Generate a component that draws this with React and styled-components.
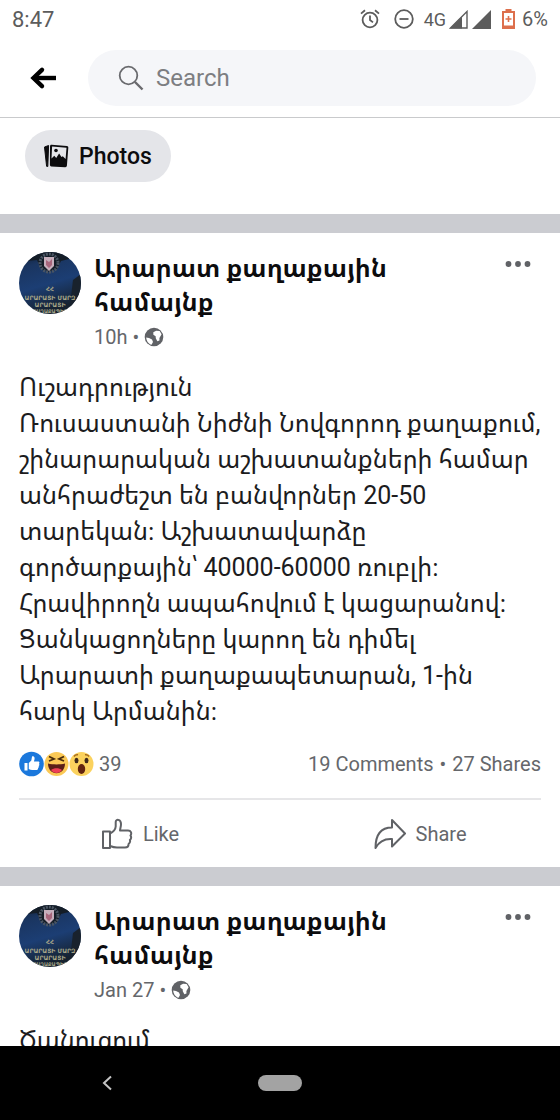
import React from 'react';
import styled, { createGlobalStyle } from 'styled-components';

const GlobalStyle = createGlobalStyle`
  * {
    box-sizing: border-box;
  }

  body {
    margin: 0;
    background: #fff;
    color: #0c0c0e;
    font-family: Roboto, 'Noto Sans Armenian', 'Noto Sans', 'DejaVu Sans', sans-serif;
  }

  button,
  input {
    font-family: inherit;
  }

  button {
    padding: 0;
    border: none;
    background: none;
    cursor: pointer;
  }

  svg {
    display: block;
    flex-shrink: 0;
  }
`;

const Screen = styled.div`
  display: flex;
  flex-direction: column;
  height: 100vh;
  overflow: hidden;
`;

const StatusBar = styled.div`
  display: flex;
  align-items: center;
  justify-content: space-between;
  height: 38px;
  padding: 0 12px;
  flex-shrink: 0;
  color: #5c5c5c;
  font-size: 20px;
`;

const Clock = styled.span`
  font-size: 22px;
`;

const StatusIcons = styled.div`
  display: flex;
  align-items: center;
`;

const StatusIcon = styled.svg`
  margin-right: ${({ $gap }) => $gap}px;
`;

const Network = styled.span`
  margin-right: 3px;
  font-size: 18px;
`;

const Header = styled.header`
  display: flex;
  align-items: center;
  height: 80px;
  padding: 0 24px 0 28px;
  flex-shrink: 0;
  border-bottom: 1px solid #c9cacc;
`;

const BackButton = styled.button`
  width: 60px;
`;

const SearchField = styled.label`
  display: flex;
  flex: 1;
  align-items: center;
  gap: 12px;
  height: 56px;
  padding: 0 30px;
  border-radius: 28px;
  background: #f5f6f9;
`;

const SearchInput = styled.input`
  flex: 1;
  min-width: 0;
  padding: 0;
  border: none;
  outline: none;
  background: transparent;
  color: #333;
  font-size: 24px;

  &::placeholder {
    color: #7d7e82;
    opacity: 1;
  }
`;

const Feed = styled.main`
  flex: 1;
  min-height: 0;
  overflow: hidden;
`;

const Chips = styled.div`
  padding: 12px 25px 32px;
`;

const Chip = styled.button`
  display: flex;
  align-items: center;
  gap: 10px;
  height: 52px;
  padding: 0 19px;
  border-radius: 26px;
  background: #e4e5e9;
  color: #0c0c0e;
  font-size: 23px;
  font-weight: 500;
`;

const Post = styled.article`
  padding: 0 19px;
  border-top: 19px solid #cbccd1;
`;

const PostHeader = styled.div`
  display: flex;
  align-items: flex-start;
  padding-top: 19px;
`;

const PostInfo = styled.div`
  flex: 1;
  min-width: 0;
  margin-left: 13px;
`;

const Author = styled.h2`
  max-width: 320px;
  margin: 0;
  font-size: 25px;
  font-weight: 700;
  line-height: 34px;
`;

const Meta = styled.div`
  display: flex;
  align-items: center;
  gap: 5px;
  height: 34px;
  color: #65676b;
  font-size: 20px;
`;

const MoreButton = styled.button`
  padding: 8px 10px;
`;

const Body = styled.p`
  margin: 16px 0 0;
  color: #1c1c1e;
  font-size: 25px;
  line-height: 36px;
  white-space: pre-line;
`;

const Stats = styled.div`
  display: flex;
  align-items: center;
  gap: 6px;
  height: 70px;
  border-bottom: 2px solid #e6e6e8;
  color: #65676b;
  font-size: 20px;
`;

const Reactions = styled.div`
  display: flex;
  flex: 1;
  align-items: center;
`;

const Count = styled.span`
  margin-left: 5px;
`;

const Actions = styled.div`
  display: grid;
  grid-template-columns: 1fr 1fr;
  height: 67px;
  margin: 0 -19px;
`;

const Action = styled.button`
  display: flex;
  align-items: center;
  justify-content: center;
  gap: 10px;
  color: #65676b;
  font-size: 20px;
`;

const NavBar = styled.nav`
  display: grid;
  grid-template-columns: 1fr auto 1fr;
  align-items: center;
  height: 74px;
  flex-shrink: 0;
  background: #000;
`;

const NavBack = styled.button`
  justify-self: end;
  margin-right: 145px;
`;

const HomePill = styled.button`
  width: 44px;
  height: 16px;
  border-radius: 8px;
  background: #a3a3a3;
`;

const posts = [
  {
    id: 1,
    author: 'Արարատ քաղաքային համայնք',
    time: '10h',
    text: `Ուշադրություն
Ռուսաստանի Նիժնի Նովգորոդ քաղաքում,
շինարարական աշխատանքների համար
անհրաժեշտ են բանվորներ 20-50
տարեկան։ Աշխատավարձը
գործարքային՝ 40000-60000 ռուբլի։
Հրավիրողն ապահովում է կացարանով։
Ցանկացողները կարող են դիմել
Արարատի քաղաքապետարան, 1-ին
հարկ Արմանին։`,
    reactions: 39,
    comments: 19,
    shares: 27,
  },
  {
    id: 2,
    author: 'Արարատ քաղաքային համայնք',
    time: 'Jan 27',
    text: 'Ծանուցում',
  },
];

const AlarmIcon = () => (
  <StatusIcon $gap={14} width="20" height="20" viewBox="0 0 20 20" fill="none" stroke="#5c5c5c" strokeWidth="1.8">
    <circle cx="10" cy="11" r="7.4" />
    <path d="M10 6.5V11l3 2.4M1 4.6l4-3.4M19 4.6l-4-3.4" />
  </StatusIcon>
);

const DndIcon = () => (
  <StatusIcon $gap={10} width="20" height="20" viewBox="0 0 20 20" fill="none" stroke="#5c5c5c" strokeWidth="1.8">
    <circle cx="10" cy="10" r="8.8" />
    <path d="M5.5 10h9" />
  </StatusIcon>
);

const SignalIcon = ({ partial }) => (
  <StatusIcon $gap={partial ? 4 : 11} width="19" height="19" viewBox="0 0 19 19" fill="#5c5c5c">
    {partial ? (
      <>
        <path d="M1.5 18 18 1.5V18z" fill="none" stroke="#5c5c5c" strokeWidth="1.4" />
        <path d="M1 18.5 13 6.5v12z" />
      </>
    ) : (
      <path d="M0 19 19 0v19z" />
    )}
  </StatusIcon>
);

const BatteryIcon = () => (
  <StatusIcon $gap={7} width="13" height="20" viewBox="0 0 13 20" fill="none" stroke="#dd6f4c" strokeWidth="2">
    <path d="M4.5 2V1h4v1" />
    <path d="M1 3h11v16H1z" />
    <path d="M3.5 10h6M6.5 7v6" strokeWidth="1.6" />
    <path d="M1 17.5h11" />
  </StatusIcon>
);

const BackArrow = () => (
  <svg width="30" height="24" viewBox="0 0 30 24" fill="none" stroke="#000" strokeWidth="4.4">
    <path d="M28 12H6" />
    <path d="M14 3.8 5.5 12l8.5 8.2" strokeLinecap="round" strokeLinejoin="miter" />
  </svg>
);

const SearchIcon = () => (
  <svg width="26" height="26" viewBox="0 0 26 26" fill="none" stroke="#696a6e" strokeWidth="1.8">
    <circle cx="10.5" cy="10.5" r="8.8" />
    <path d="m17 17 7.5 7.5" strokeWidth="2.4" />
  </svg>
);

const PhotosIcon = () => (
  <svg width="25" height="24" viewBox="0 0 25 24">
    <path d="M0.5 3 4.6 1.5 3.8 22.5 2.6 22.3z" fill="#0c0c0e" stroke="#0c0c0e" strokeLinejoin="round" />
    <path d="m7.5.8 15.4 1.2c1 .1 1.5.8 1.4 1.8l-1.4 18c-.1 1-.8 1.500-1.800 1.400L7.300 22.400c-1-.1-1.400-.7-1.400-1.600L6 2.400C6 1.400 6.600.7 7.500.8z" fill="#0c0c0e" />
    <path d="m8.1 2.600 14.400 1.200-.9 11.300-2.800-2.800-1.300.6-2.400-3.400-2.900 4.400-1.900-2.200-2.800 2.800z" fill="#e4e5e9" />
    <circle cx="12" cy="6.500" r="1.800" fill="#0c0c0e" />
  </svg>
);

const MoreIcon = () => (
  <svg width="26" height="8" viewBox="0 0 26 8" fill="#606266">
    <circle cx="3.5" cy="4" r="2.9" />
    <circle cx="13" cy="4" r="2.9" />
    <circle cx="22.5" cy="4" r="2.9" />
  </svg>
);

const GlobeIcon = () => (
  <svg width="20" height="20" viewBox="0 0 20 20">
    <circle cx="10" cy="10" r="9.3" fill="#606266" />
    <path d="M3 5.500 6 3l4 1.500 2.500-.5 1 2-2.500 2-2 .5L8 11l-2.500.5L3.500 9z" fill="#fff" transform="rotate(100 10 10)" />
    <path d="M2.200 10.500 5 11l3 1.500 1 2.500-1.500 2.800C4.500 17 2.500 14 2.200 10.500z" fill="#fff" />
  </svg>
);

const Avatar = ({ id }) => (
  <svg width="62" height="62" viewBox="0 0 62 62" role="img" aria-label="Avatar">
    <defs>
      <clipPath id={`avatar-clip-${id}`}>
        <circle cx="31" cy="31" r="31" />
      </clipPath>
      <linearGradient id={`avatar-sky-${id}`} x1="0" y1="0" x2="0.3" y2="1">
        <stop offset="0" stopColor="#101c2c" />
        <stop offset="0.25" stopColor="#1a3560" />
        <stop offset="0.6" stopColor="#1c3e74" />
        <stop offset="1" stopColor="#16222f" />
      </linearGradient>
    </defs>
    <g clipPath={`url(#avatar-clip-${id})`}>
      <path d="M0 0h62v62H0z" fill={`url(#avatar-sky-${id})`} />
      <path d="M8 0h46l-4 7-8 2-4 8-8 3-8-3-4-9-10 1z" fill="#141d27" />
      <path d="M54 28l8-6v40H50z" fill="#19222d" />
      <circle cx="30" cy="11" r="9" fill="none" stroke="#4a5563" strokeWidth="3" strokeDasharray="2 1" />
      <path d="M25 5h10v9l-5 5-5-5z" fill="#c6aebb" />
      <path d="m27 8 3 2 3-3v6l-3 3-3-3z" fill="#a8667c" />
      <g fill="#a5a488" fontFamily="DejaVu Sans, sans-serif" fontWeight="700" textAnchor="middle">
        <text x="31" y="39" fontSize="6">ՀՀ</text>
        <text x="31" y="48" fontSize="6">ԱՐԱՐԱՏԻ ՄԱՐԶ</text>
        <text x="31" y="55" fontSize="6">ԱՐԱՐԱՏԻ</text>
        <text x="31" y="61" fontSize="5">ՔԱՂԱՔԱՊԵՏ</text>
      </g>
    </g>
  </svg>
);

const LikeReaction = () => (
  <svg width="25" height="26" viewBox="0 0 25 26">
    <circle cx="12.500" cy="13" r="12.300" fill="#1b78dc" />
    <path d="M5.500 12h3v7.500h-3zM9.800 12l2.500-2.400.7-3.800c.2-.9 2.600-.5 2.600 1.500 0 1.500-.6 2.500-.6 3.200h4c1.600 0 1.800 1.500 1 2.300.6.8.4 1.700-.3 2.200.3.900 0 1.500-.6 2 .1 1.400-.6 2-1.700 2h-4.200c-1.200 0-2.300-.3-3.400-1z" fill="#fff" />
  </svg>
);

const HahaReaction = () => (
  <svg width="25" height="26" viewBox="0 0 25 26">
    <circle cx="12.500" cy="13" r="12" fill="#fbc956" />
    <path d="m5 5.500 5 2.500-5 2M20 5.500 15 8l5 2" fill="none" stroke="#4a2c0c" strokeWidth="1.800" />
    <path d="M4 12.500c5 1.200 12 1.200 17 0 0 6-4 9.800-8.500 9.800S4 18.500 4 12.500z" fill="#5a1f18" />
    <path d="M7 19c3-2.500 8-2.500 11 0-2.500 4-8.500 4-11 0z" fill="#ee3f55" />
  </svg>
);

const WowReaction = () => (
  <svg width="25" height="26" viewBox="0 0 25 26">
    <circle cx="12.500" cy="13" r="12" fill="#fbd25e" />
    <path d="M5 5.500c1-1.500 2.500-2 4-1.700M20 5.500c-1-1.500-2.500-2-4-1.700" fill="none" stroke="#a86c1e" strokeWidth="1.400" />
    <ellipse cx="7.500" cy="9.500" rx="2" ry="2.700" fill="#3f2a1c" />
    <ellipse cx="17.500" cy="9.500" rx="2" ry="2.700" fill="#3f2a1c" />
    <ellipse cx="12.500" cy="18" rx="3.700" ry="5" fill="#63240f" />
  </svg>
);

const LikeIcon = () => (
  <svg width="32" height="32" viewBox="0 0 32 32" fill="none" stroke="#606266" strokeWidth="2" strokeLinejoin="round">
    <path d="M2 13.500h7V30H2z" />
    <path d="M9 15.500c3-1.500 5.500-4 5.700-7V4c0-3.300 5.300-3 5.300 2 0 2.500-.8 4.500-1 6.500h8c3 0 4 2.700 2.500 5 1 1.700.8 3.300-.6 4.500.6 1.700 0 3-1.300 4 0 2.500-1.500 3.500-3.600 3.500H16c-2.500 0-4.500-.5-7-1.500" />
  </svg>
);

const ShareIcon = () => (
  <svg width="32" height="32" viewBox="0 0 32 32" fill="none" stroke="#606266" strokeWidth="2" strokeLinejoin="round">
    <path d="M18 2 31 15.500 18 28.500V21C10 20.500 5 23.500 1.500 30 1.500 17 7 9.500 18 9.500z" />
  </svg>
);

const FeedPost = ({ post }) => (
  <Post>
    <PostHeader>
      <Avatar id={post.id} />
      <PostInfo>
        <Author>{post.author}</Author>
        <Meta>
          <span>{post.time}</span>
          <span>•</span>
          <GlobeIcon />
        </Meta>
      </PostInfo>
      <MoreButton aria-label="More">
        <MoreIcon />
      </MoreButton>
    </PostHeader>
    <Body>{post.text}</Body>
    {post.reactions && (
      <>
        <Stats>
          <Reactions>
            <LikeReaction />
            <HahaReaction />
            <WowReaction />
            <Count>{post.reactions}</Count>
          </Reactions>
          <span>{post.comments} Comments</span>
          <span>•</span>
          <span>{post.shares} Shares</span>
        </Stats>
        <Actions>
          <Action>
            <LikeIcon />
            Like
          </Action>
          <Action>
            <ShareIcon />
            Share
          </Action>
        </Actions>
      </>
    )}
  </Post>
);

const App = () => (
  <>
    <GlobalStyle />
    <Screen>
      <StatusBar>
        <Clock>8:47</Clock>
        <StatusIcons>
          <AlarmIcon />
          <DndIcon />
          <Network>4G</Network>
          <SignalIcon partial />
          <SignalIcon />
          <BatteryIcon />
          <span>6%</span>
        </StatusIcons>
      </StatusBar>
      <Header>
        <BackButton aria-label="Back">
          <BackArrow />
        </BackButton>
        <SearchField>
          <SearchIcon />
          <SearchInput type="text" placeholder="Search" aria-label="Search" />
        </SearchField>
      </Header>
      <Feed>
        <Chips>
          <Chip>
            <PhotosIcon />
            Photos
          </Chip>
        </Chips>
        {posts.map((post) => (
          <FeedPost key={post.id} post={post} />
        ))}
      </Feed>
      <NavBar>
        <NavBack aria-label="Back">
          <svg width="12" height="16" viewBox="0 0 12 16" fill="none" stroke="#c4c4c4" strokeWidth="2">
            <path d="M10 1.500 3 8l7 6.500" />
          </svg>
        </NavBack>
        <HomePill aria-label="Home" />
        <span />
      </NavBar>
    </Screen>
  </>
);

export default App;
